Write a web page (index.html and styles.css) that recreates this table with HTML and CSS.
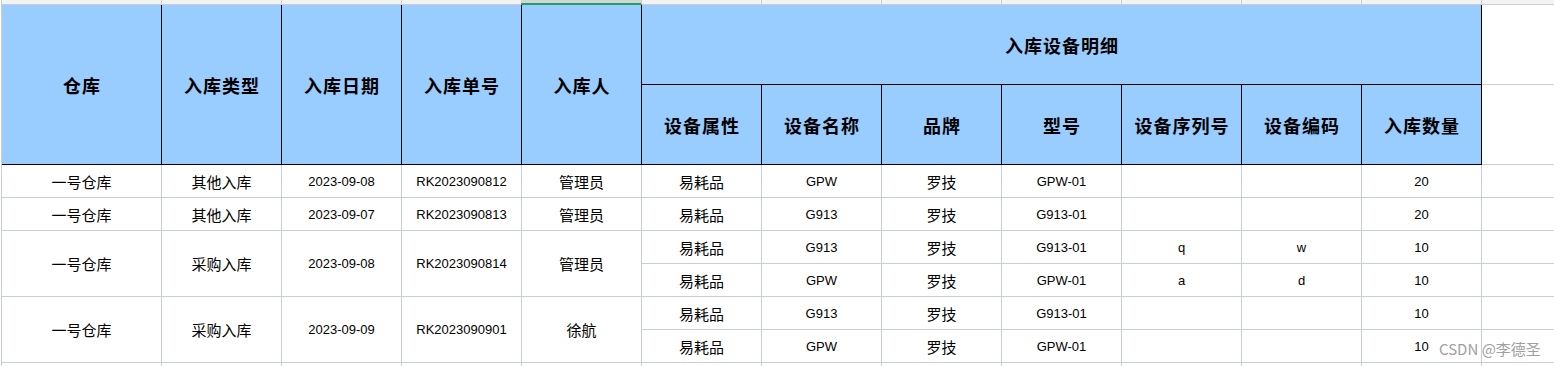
FILE: index.html
```html
<!DOCTYPE html>
<html lang="zh-CN">
<head>
<meta charset="utf-8">
<title>入库设备明细</title>
<link rel="stylesheet" href="styles.css">
</head>
<body>
<div class="sheet">
  <div class="grid">
    <!-- top strip -->
    <div class="top"></div><div class="top"></div><div class="top"></div><div class="top"></div>
    <div class="top sel"></div>
    <div class="top"></div><div class="top"></div><div class="top"></div><div class="top"></div>
    <div class="top"></div><div class="top"></div><div class="top"></div><div class="top"></div>

    <!-- header -->
    <div class="h tall">仓库</div>
    <div class="h tall">入库类型</div>
    <div class="h tall">入库日期</div>
    <div class="h tall">入库单号</div>
    <div class="h tall">入库人</div>
    <div class="h group">入库设备明细</div>
    <div class="c"></div>
    <div class="h">设备属性</div>
    <div class="h">设备名称</div>
    <div class="h">品牌</div>
    <div class="h">型号</div>
    <div class="h">设备序列号</div>
    <div class="h">设备编码</div>
    <div class="h">入库数量</div>
    <div class="c"></div>

    <!-- row 1 -->
    <div class="c zh">一号仓库</div>
    <div class="c zh">其他入库</div>
    <div class="c en">2023-09-08</div>
    <div class="c en">RK2023090812</div>
    <div class="c zh">管理员</div>
    <div class="c zh">易耗品</div>
    <div class="c en">GPW</div>
    <div class="c zh">罗技</div>
    <div class="c en">GPW-01</div>
    <div class="c en"></div>
    <div class="c en"></div>
    <div class="c en">20</div>
    <div class="c"></div>

    <!-- row 2 -->
    <div class="c zh">一号仓库</div>
    <div class="c zh">其他入库</div>
    <div class="c en">2023-09-07</div>
    <div class="c en">RK2023090813</div>
    <div class="c zh">管理员</div>
    <div class="c zh">易耗品</div>
    <div class="c en">G913</div>
    <div class="c zh">罗技</div>
    <div class="c en">G913-01</div>
    <div class="c en"></div>
    <div class="c en"></div>
    <div class="c en">20</div>
    <div class="c"></div>

    <!-- rows 3-4 -->
    <div class="c zh span2">一号仓库</div>
    <div class="c zh span2">采购入库</div>
    <div class="c en span2">2023-09-08</div>
    <div class="c en span2">RK2023090814</div>
    <div class="c zh span2">管理员</div>
    <div class="c zh">易耗品</div>
    <div class="c en">G913</div>
    <div class="c zh">罗技</div>
    <div class="c en">G913-01</div>
    <div class="c en">q</div>
    <div class="c en">w</div>
    <div class="c en">10</div>
    <div class="c"></div>
    <div class="c zh">易耗品</div>
    <div class="c en">GPW</div>
    <div class="c zh">罗技</div>
    <div class="c en">GPW-01</div>
    <div class="c en">a</div>
    <div class="c en">d</div>
    <div class="c en">10</div>
    <div class="c"></div>

    <!-- rows 5-6 -->
    <div class="c zh span2">一号仓库</div>
    <div class="c zh span2">采购入库</div>
    <div class="c en span2">2023-09-09</div>
    <div class="c en span2">RK2023090901</div>
    <div class="c zh span2">徐航</div>
    <div class="c zh">易耗品</div>
    <div class="c en">G913</div>
    <div class="c zh">罗技</div>
    <div class="c en">G913-01</div>
    <div class="c en"></div>
    <div class="c en"></div>
    <div class="c en">10</div>
    <div class="c"></div>
    <div class="c zh">易耗品</div>
    <div class="c en">GPW</div>
    <div class="c zh">罗技</div>
    <div class="c en">GPW-01</div>
    <div class="c en"></div>
    <div class="c en"></div>
    <div class="c en">10</div>
    <div class="c"></div>

    <!-- partial row -->
    <div class="c"></div><div class="c"></div><div class="c"></div><div class="c"></div>
    <div class="c"></div><div class="c"></div><div class="c"></div><div class="c"></div>
    <div class="c"></div><div class="c"></div><div class="c"></div><div class="c"></div>
    <div class="c"></div>
  </div>
  <div class="watermark">CSDN @李德圣</div>
</div>
</body>
</html>
```

FILE: styles.css
```css
html, body {
  margin: 0;
  padding: 0;
  background: #ffffff;
  overflow: hidden;
}

.sheet {
  position: relative;
  width: 1554px;
  height: 366px;
  overflow: hidden;
}

.grid {
  display: grid;
  grid-template-columns: 160px repeat(12, 120px);
  grid-template-rows: 5px 80px 80px repeat(7, 33px);
  margin-left: 1px;
  border-left: 1px solid #c8cdda;
  width: max-content;
}

.grid > div {
  box-sizing: border-box;
  border-right: 1px solid #c8cdda;
  border-bottom: 1px solid #c8cdda;
  display: flex;
  align-items: center;
  justify-content: center;
  white-space: nowrap;
  color: #000;
}

.grid > .top {
  background: #f3f3f3;
}

.grid > .top.sel {
  background: #d4d4d4;
  border-bottom: 2px solid #21a366;
  margin-left: -1px;
}

.grid > .h {
  background: #99ccff;
  border-right-color: #000;
  border-bottom-color: #000;
  font-family: "Noto Sans CJK SC", sans-serif;
  font-weight: 700;
  font-size: 18px;
  letter-spacing: 1px;
  text-indent: 1px;
}

.grid > .tall {
  grid-row: span 2;
}

.grid > .group {
  grid-column: span 7;
}

.grid > .span2 {
  grid-row: span 2;
}

.zh {
  font-family: "Noto Sans CJK SC", sans-serif;
  font-size: 15px;
}

.en {
  font-family: "Liberation Sans", "Noto Sans CJK SC", sans-serif;
  font-size: 13px;
}

.watermark {
  position: absolute;
  left: 1439px;
  top: 338px;
  font-family: "Noto Sans CJK SC", sans-serif;
  font-size: 15px;
  color: #a0a0a0;
  white-space: nowrap;
}
```
